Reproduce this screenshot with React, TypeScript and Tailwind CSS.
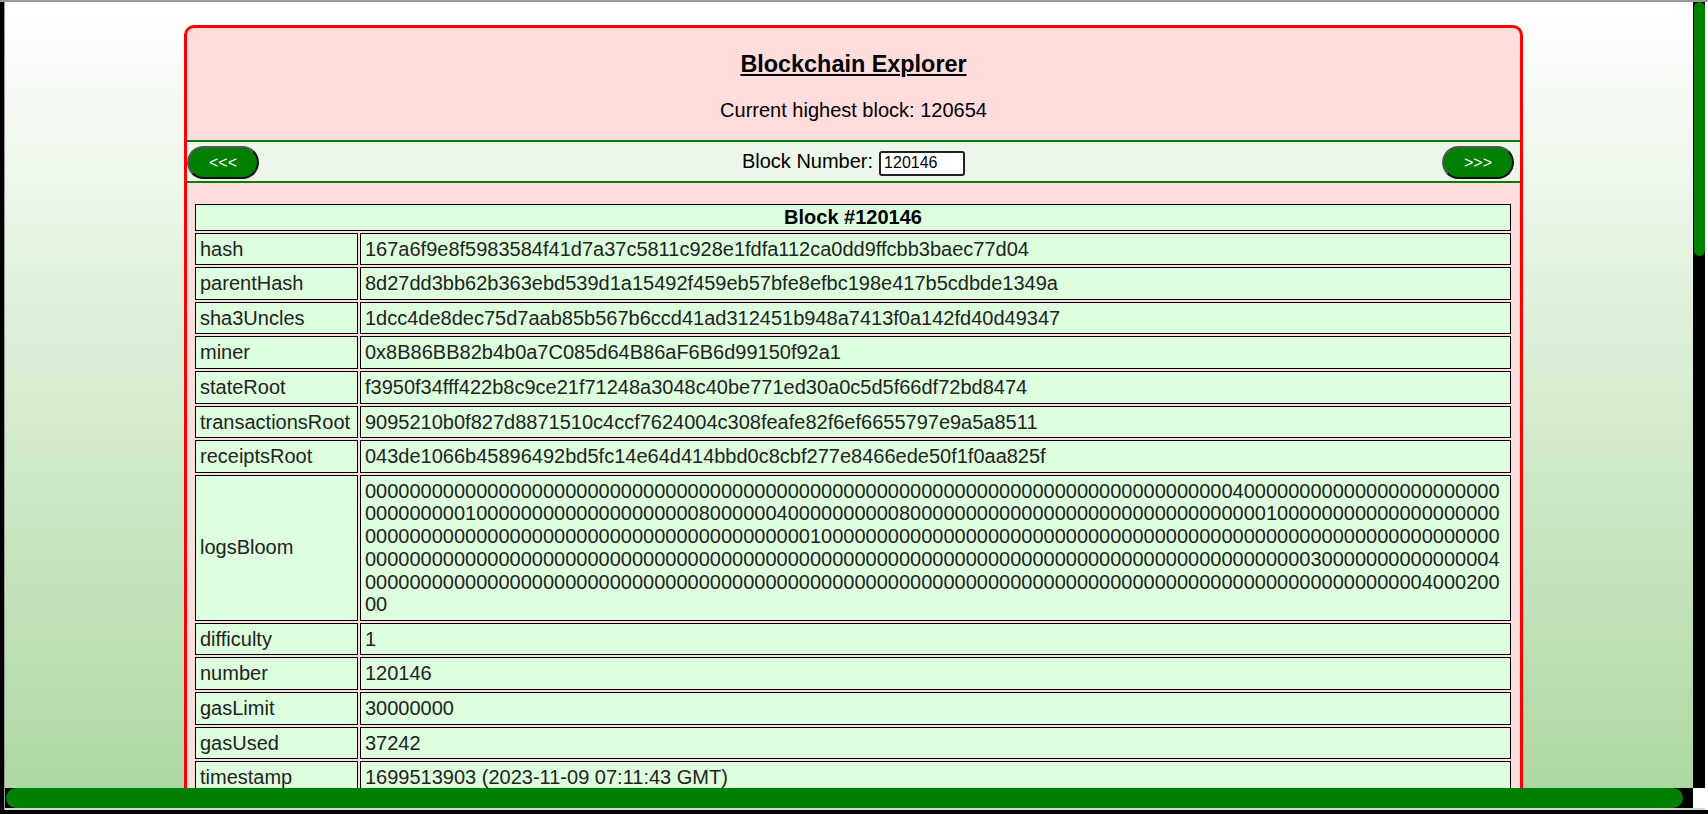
import React from "react";

type Row = { label: string; value: string };

// logsBloom: 512 hex chars, mostly zeros; set the few non-zero digits by line/column
function buildBloom(): string {
  const chars: string[] = Array(512).fill("0");
  const marks: [number, number, string][] = [
    [0, 78, "4"],
    [1, 9, "1"],
    [1, 30, "8"],
    [1, 37, "4"],
    [1, 48, "8"],
    [1, 81, "1"],
    [2, 40, "1"],
    [3, 85, "3"],
    [3, 101, "4"],
    [4, 95, "4"],
    [4, 99, "2"],
  ];
  for (const [line, col, c] of marks) chars[line * 102 + col] = c;
  return chars.join("");
}

const rows: Row[] = [
  { label: "hash", value: "167a6f9e8f5983584f41d7a37c5811c928e1fdfa112ca0dd9ffcbb3baec77d04" },
  { label: "parentHash", value: "8d27dd3bb62b363ebd539d1a15492f459eb57bfe8efbc198e417b5cdbde1349a" },
  { label: "sha3Uncles", value: "1dcc4de8dec75d7aab85b567b6ccd41ad312451b948a7413f0a142fd40d49347" },
  { label: "miner", value: "0x8B86BB82b4b0a7C085d64B86aF6B6d99150f92a1" },
  { label: "stateRoot", value: "f3950f34fff422b8c9ce21f71248a3048c40be771ed30a0c5d5f66df72bd8474" },
  { label: "transactionsRoot", value: "9095210b0f827d8871510c4ccf7624004c308feafe82f6ef6655797e9a5a8511" },
  { label: "receiptsRoot", value: "043de1066b45896492bd5fc14e64d414bbd0c8cbf277e8466ede50f1f0aa825f" },
  { label: "logsBloom", value: buildBloom() },
  { label: "difficulty", value: "1" },
  { label: "number", value: "120146" },
  { label: "gasLimit", value: "30000000" },
  { label: "gasUsed", value: "37242" },
  { label: "timestamp", value: "1699513903 (2023-11-09 07:11:43 GMT)" },
];

function NavButton({ children, className }: { children: React.ReactNode; className?: string }) {
  return (
    <button
      type="button"
      className={`mt-[4px] h-[33px] w-[72px] rounded-full border-2 border-[#555] border-r-[#111] border-b-[#111] bg-[#008000] text-[16px] leading-none text-white ${className ?? ""}`}
    >
      {children}
    </button>
  );
}

function BlockCard() {
  return (
    <div className="ml-[179px] mt-[23px] w-[1339px] rounded-[10px] border-[3px] border-[#ff0000] bg-[#ffdddd] pb-[20px]">
      <div className="h-[112px] pt-[23px] text-center text-black">
        <h3 className="text-[23.4px] font-bold leading-[27px] underline">Blockchain Explorer</h3>
        <p className="mt-[21px] text-[20px] leading-[23px]">Current highest block: 120654</p>
      </div>

      <div className="grid h-[43px] grid-cols-[1fr_auto_1fr] items-start border-y-2 border-[#008000] bg-[#edf6ea]">
        <NavButton className="justify-self-start">&lt;&lt;&lt;</NavButton>
        <div className="mt-[8px] flex items-baseline gap-[6px] text-[20px] leading-[23px] text-black">
          <span>Block Number:</span>
          <input
            type="text"
            defaultValue="120146"
            className="h-[25px] w-[86px] rounded-[3px] border-2 border-[#222] bg-white pl-[3px] text-[16px] leading-[19px] text-black"
          />
        </div>
        <NavButton className="mr-[6px] justify-self-end">&gt;&gt;&gt;</NavButton>
      </div>

      <table className="ml-[6px] mt-[19px] w-[1320px] border-separate border-spacing-[2px] text-[20px] leading-[22.7px]">
        <thead>
          <tr>
            <th colSpan={2} className="border border-black bg-[#ddffdd] py-[1px] text-center font-bold text-black">
              Block #120146
            </th>
          </tr>
        </thead>
        <tbody>
          {rows.map((r) => (
            <tr key={r.label}>
              <td className="w-[163px] whitespace-nowrap border border-black bg-[#ddffdd] px-[4px] py-[3.95px] align-middle text-[#222]">
                {r.label}
              </td>
              <td className="break-all border border-black bg-[#ddffdd] px-[4px] py-[3.95px] align-middle text-[#222]">
                {r.value}
              </td>
            </tr>
          ))}
        </tbody>
      </table>
    </div>
  );
}

export default function App() {
  return (
    <div className="flex h-[814px] w-[1708px] flex-col overflow-hidden bg-black font-['Liberation_Sans',Arial,sans-serif]">
      <div className="h-[2px] shrink-0 bg-[#9a9a9a]" />
      <div className="flex min-h-0 flex-1">
        <div className="w-[4px] shrink-0 bg-black" />
        <div className="w-[1px] shrink-0 bg-[#9a9a9a]" />
        <div className="flex min-w-0 flex-1 flex-col">
          <div className="flex min-h-0 flex-1">
            <main className="min-w-0 flex-1 overflow-hidden bg-linear-to-b from-white to-[#aed8a2]">
              <BlockCard />
            </main>
            <div className="flex w-[12px] shrink-0 flex-col bg-black px-[0.5px]">
              <div className="h-[254px] rounded-full bg-[#008000]" />
            </div>
          </div>
          <div className="flex h-[20px] shrink-0">
            <div className="flex flex-1 bg-black pl-[1px] pr-[10px]">
              <div className="flex-1 rounded-full bg-[#008000]" />
            </div>
            <div className="w-[12px] bg-white" />
          </div>
          <div className="h-[2px] shrink-0 bg-[#d8d8d8]" />
        </div>
        <div className="w-[3px] shrink-0 bg-white" />
      </div>
      <div className="h-[4px] shrink-0 bg-black" />
    </div>
  );
}
